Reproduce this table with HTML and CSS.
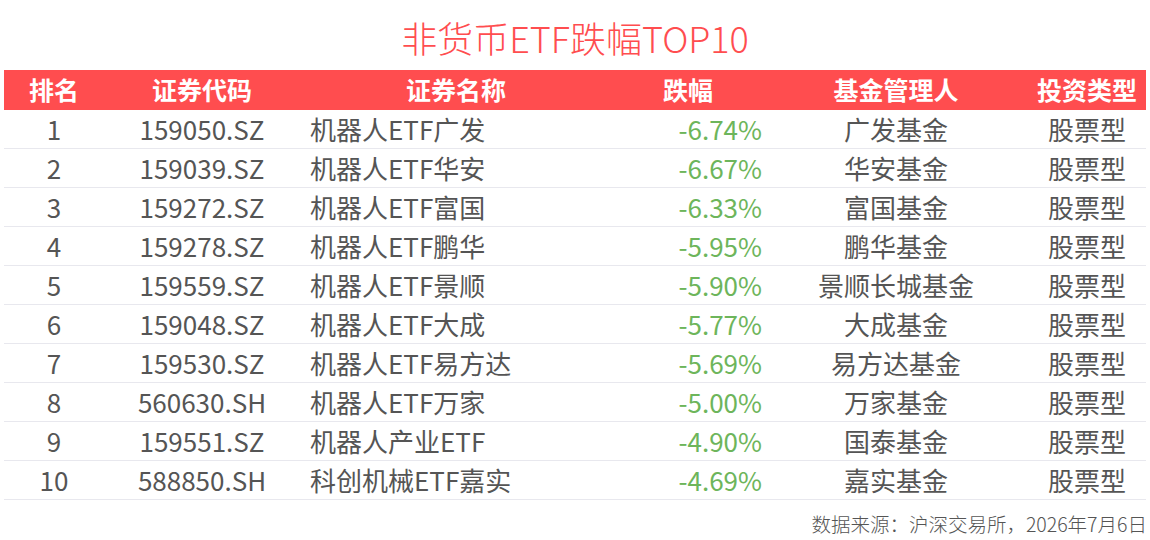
FILE: index.html
```html
<!DOCTYPE html>
<html lang="zh-CN">
<head>
<meta charset="utf-8">
<title>非货币ETF跌幅TOP10</title>
<link rel="stylesheet" href="styles.css">
</head>
<body>
<div class="page">
  <h1 class="title">非货币ETF跌幅TOP10</h1>
  <div class="table">
    <div class="row head">
      <div class="c rank">排名</div>
      <div class="c code">证券代码</div>
      <div class="c name">证券名称</div>
      <div class="c pct">跌幅</div>
      <div class="c mgr">基金管理人</div>
      <div class="c type">投资类型</div>
    </div>
    <div class="row"><div class="c rank">1</div><div class="c code">159050.SZ</div><div class="c name">机器人ETF广发</div><div class="c pct">-6.74%</div><div class="c mgr">广发基金</div><div class="c type">股票型</div></div>
    <div class="row"><div class="c rank">2</div><div class="c code">159039.SZ</div><div class="c name">机器人ETF华安</div><div class="c pct">-6.67%</div><div class="c mgr">华安基金</div><div class="c type">股票型</div></div>
    <div class="row"><div class="c rank">3</div><div class="c code">159272.SZ</div><div class="c name">机器人ETF富国</div><div class="c pct">-6.33%</div><div class="c mgr">富国基金</div><div class="c type">股票型</div></div>
    <div class="row"><div class="c rank">4</div><div class="c code">159278.SZ</div><div class="c name">机器人ETF鹏华</div><div class="c pct">-5.95%</div><div class="c mgr">鹏华基金</div><div class="c type">股票型</div></div>
    <div class="row"><div class="c rank">5</div><div class="c code">159559.SZ</div><div class="c name">机器人ETF景顺</div><div class="c pct">-5.90%</div><div class="c mgr">景顺长城基金</div><div class="c type">股票型</div></div>
    <div class="row"><div class="c rank">6</div><div class="c code">159048.SZ</div><div class="c name">机器人ETF大成</div><div class="c pct">-5.77%</div><div class="c mgr">大成基金</div><div class="c type">股票型</div></div>
    <div class="row"><div class="c rank">7</div><div class="c code">159530.SZ</div><div class="c name">机器人ETF易方达</div><div class="c pct">-5.69%</div><div class="c mgr">易方达基金</div><div class="c type">股票型</div></div>
    <div class="row"><div class="c rank">8</div><div class="c code">560630.SH</div><div class="c name">机器人ETF万家</div><div class="c pct">-5.00%</div><div class="c mgr">万家基金</div><div class="c type">股票型</div></div>
    <div class="row"><div class="c rank">9</div><div class="c code">159551.SZ</div><div class="c name">机器人产业ETF</div><div class="c pct">-4.90%</div><div class="c mgr">国泰基金</div><div class="c type">股票型</div></div>
    <div class="row"><div class="c rank">10</div><div class="c code">588850.SH</div><div class="c name">科创机械ETF嘉实</div><div class="c pct">-4.69%</div><div class="c mgr">嘉实基金</div><div class="c type">股票型</div></div>
  </div>
  <div class="source">数据来源：沪深交易所，2026年7月6日</div>
</div>
</body>
</html>
```
FILE: styles.css
```css
html, body {
  margin: 0;
  padding: 0;
  background: #ffffff;
}
body {
  font-family: "Noto Sans CJK SC", "Noto Sans", sans-serif;
  color: #555555;
}
.page {
  width: 1150px;
  height: 540px;
  overflow: hidden;
}
.title {
  margin: 0;
  height: 70px;
  line-height: 75px;
  text-align: center;
  font-size: 36px;
  font-weight: 300;
  color: #ff4d4f;
}
.table {
  margin-left: 4px;
  width: 1142px;
}
.row {
  display: grid;
  grid-template-columns: 100px 196px 312px 152px 264px 118px;
  height: 38px;
  line-height: 38px;
  font-size: 26px;
  border-bottom: 1px solid #e8e8ee;
}
.row.head {
  height: 40px;
  line-height: 38px;
  background: #ff4d4f;
  color: #ffffff;
  font-size: 25px;
  font-weight: 700;
  border-bottom: none;
}
.c {
  text-align: center;
  white-space: nowrap;
}
.row .name {
  text-align: left;
  padding-left: 10px;
}
.row .pct {
  text-align: right;
  padding-right: 2px;
  color: #6db55b;
}
.row.head .name,
.row.head .pct {
  text-align: center;
  padding: 0;
  color: #ffffff;
}
.source {
  text-align: right;
  padding-right: 3px;
  font-size: 19.5px;
  font-weight: 300;
  line-height: 48px;
  color: #555555;
}
```
